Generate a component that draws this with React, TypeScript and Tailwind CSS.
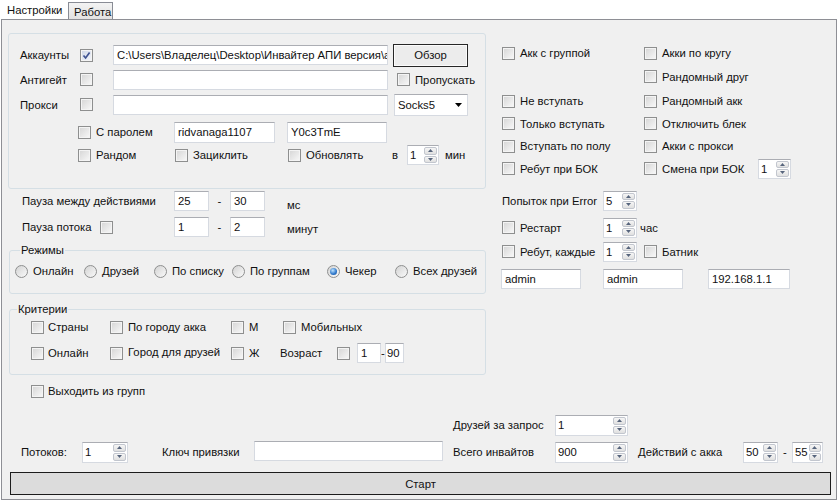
import React from "react";

type Cls = { className?: string };

function Check({ checked = false }: { checked?: boolean }) {
  return (
    <span
      className={`inline-flex items-center justify-center w-[13px] h-[13px] shrink-0 border border-[#8e8f8f] shadow-[inset_0_0_0_1px_#f4f4f4] bg-gradient-to-br ${
        checked ? "from-[#cdd5e6] to-[#f5f7fb]" : "from-[#d5d5d5] to-[#f9f9f9]"
      }`}
    >
      {checked && (
        <svg viewBox="0 0 9 9" className="w-[9px] h-[9px]">
          <path d="M1.5 4.5 L3.6 7 L7.6 1.6" fill="none" stroke="#3e5291" strokeWidth="1.7" />
        </svg>
      )}
    </span>
  );
}

function Radio({ checked = false }: { checked?: boolean }) {
  return (
    <span className="inline-flex items-center justify-center w-[13px] h-[13px] shrink-0 rounded-full border border-[#8e8f8f] bg-gradient-to-br from-[#d3d3d3] to-[#fafafa]">
      {checked && (
        <span className="w-[7px] h-[7px] rounded-full bg-[radial-gradient(circle_at_40%_35%,#bfe4ff,#2a74c9_60%,#1b4f96)]" />
      )}
    </span>
  );
}

function CheckText({ text, checked, className = "", gap = "ml-[5px]" }: { text: string; checked?: boolean; gap?: string } & Cls) {
  return (
    <div className={`flex items-center shrink-0 ${className}`}>
      <Check checked={checked} />
      <span className={`${gap} whitespace-nowrap`}>{text}</span>
    </div>
  );
}

function RadioText({ text, checked, className = "" }: { text: string; checked?: boolean } & Cls) {
  return (
    <div className={`flex items-center shrink-0 ${className}`}>
      <Radio checked={checked} />
      <span className="ml-[5px] whitespace-nowrap">{text}</span>
    </div>
  );
}

function Field({ value = "", className = "" }: { value?: string } & Cls) {
  return (
    <div
      className={`flex items-center shrink-0 bg-white border border-[#d6dae1] border-t-[#abadb3] pl-[3px] overflow-hidden whitespace-nowrap ${className}`}
    >
      {value}
    </div>
  );
}

function SpinBtn({ up = false }: { up?: boolean }) {
  return (
    <span className="flex-1 flex items-center justify-center border border-[#c2c6ce] rounded-[2px] bg-gradient-to-b from-[#f6f6f6] to-[#e0e0e0]">
      <svg viewBox="0 0 5 3" className="w-[5px] h-[3px]">
        <path d={up ? "M0 3 L2.5 0 L5 3 Z" : "M0 0 L2.5 3 L5 0 Z"} fill="#56647c" />
      </svg>
    </span>
  );
}

function Num({ value, className = "" }: { value: string } & Cls) {
  return (
    <div className={`flex shrink-0 bg-white border border-[#d6dae1] border-t-[#abadb3] ${className}`}>
      <span className="flex-1 flex items-center pl-[2px] whitespace-nowrap">{value}</span>
      <span className="flex flex-col w-[15px] p-[1px] gap-[1px]">
        <SpinBtn up />
        <SpinBtn />
      </span>
    </div>
  );
}

export default function App() {
  return (
    <div className="w-[838px] h-[502px] bg-white text-[11.3px] leading-[14px] text-[#111] overflow-hidden font-['Liberation_Sans',Arial,sans-serif]">
      {/* tabs */}
      <div className="flex items-end h-[19px]">
        <div className="w-[67px] h-[19px] bg-white pl-[7px] pt-[3px]">Настройки</div>
        <div className="ml-[1px] w-[45px] h-[17px] border border-b-0 border-[#898c95] bg-gradient-to-b from-[#f3f3f3] to-[#e2e2e2] pl-[5px] pt-[2px]">
          Работа
        </div>
      </div>

      <div className="ml-[1px] w-[836px] h-[481px] border border-[#8e8f95] bg-[#f0f0f0] flex flex-col">
        <div className="flex items-start">
          {/* left column */}
          <div className="ml-[6px] mt-[13px] w-[478px] flex flex-col">
            <div className="w-[478px] h-[156px] border border-[#d5dfe5] rounded-[3px] pt-[9px] pl-[11px]">
              <div className="flex items-center h-[24px]">
                <span className="w-[60px]">Аккаунты</span>
                <span className="w-[33px] flex"><Check checked /></span>
                <Field className="w-[275px] h-[20px]" value="C:\Users\Владелец\Desktop\Инвайтер АПИ версия\а" />
                <div className="ml-[5px] w-[75px] h-[23px] border border-[#262626] bg-[#ececec] shadow-[inset_0_0_0_1px_#fbfbfb] flex items-center justify-center">
                  Обзор
                </div>
              </div>
              <div className="flex items-center h-[25px]">
                <span className="w-[60px]">Антигейт</span>
                <span className="w-[33px] flex"><Check /></span>
                <Field className="w-[275px] h-[20px]" />
                <CheckText className="ml-[9px]" text="Пропускать" />
              </div>
              <div className="flex items-center h-[25px]">
                <span className="w-[60px]">Прокси</span>
                <span className="w-[33px] flex"><Check /></span>
                <Field className="w-[275px] h-[20px]" />
                <div className="ml-[6px] w-[74px] h-[22px] bg-white border border-[#d6dae1] border-t-[#abadb3] flex items-center pl-[3px]">
                  Socks5
                  <svg viewBox="0 0 7 4" className="ml-auto mr-[5px] w-[7px] h-[4px]">
                    <path d="M0 0 L3.5 4 L7 0 Z" fill="#000" />
                  </svg>
                </div>
              </div>
              <div className="flex items-center h-[22px] mt-[4px] pl-[58px]">
                <CheckText className="w-[96px]" text="С паролем" />
                <Field className="w-[101px] h-[21px]" value="ridvanaga1107" />
                <Field className="ml-[12px] w-[100px] h-[21px]" value="Y0c3TmE" />
              </div>
              <div className="flex items-center h-[20px] mt-[2px] pl-[58px]">
                <CheckText className="w-[97px]" text="Рандом" />
                <CheckText className="w-[113px]" text="Зациклить" />
                <CheckText className="w-[104px]" text="Обновлять" />
                <span className="w-[15px]">в</span>
                <Num className="w-[32px] h-[20px]" value="1" />
                <span className="ml-[6px]">мин</span>
              </div>
            </div>

            <div className="flex items-center h-[22px] mt-[1px] pl-[14px]">
              <span className="w-[152px]">Пауза между действиями</span>
              <Field className="w-[35px] h-[20px]" value="25" />
              <span className="w-[21px] text-center">-</span>
              <Field className="w-[35px] h-[20px]" value="30" />
              <span className="ml-[22px] mt-[8px]">мс</span>
            </div>
            <div className="flex items-center h-[22px] mt-[4px] pl-[14px]">
              <span className="w-[78px]">Пауза потока</span>
              <span className="w-[74px] flex"><Check /></span>
              <Field className="w-[35px] h-[20px]" value="1" />
              <span className="w-[21px] text-center">-</span>
              <Field className="w-[35px] h-[20px]" value="2" />
              <span className="ml-[22px] mt-[3px]">минут</span>
            </div>

            <fieldset className="mt-[5px] ml-[1px] w-[477px] h-[51px] border border-[#d5dfe5] rounded-[3px]">
              <legend className="ml-[10px] px-[1px]">Режимы</legend>
              <div className="flex items-center h-[22px] mt-[3px] pl-[5px]">
                <RadioText className="w-[69px]" text="Онлайн" />
                <RadioText className="w-[70px]" text="Друзей" />
                <RadioText className="w-[78px]" text="По списку" />
                <RadioText className="w-[95px]" text="По группам" />
                <RadioText className="w-[68px]" text="Чекер" checked />
                <RadioText text="Всех друзей" />
              </div>
            </fieldset>

            <fieldset className="mt-[8px] ml-[1px] w-[477px] h-[73px] border border-[#d5dfe5] rounded-[3px]">
              <legend className="ml-[7px] px-[1px]">Критерии</legend>
              <div className="flex items-center h-[22px] pl-[21px]">
                <CheckText className="w-[79px]" gap="ml-[4px]" text="Страны" />
                <CheckText className="w-[121px]" text="По городу акка" />
                <CheckText className="w-[52px]" text="М" />
                <CheckText text="Мобильных" />
              </div>
              <div className="flex items-center h-[22px] mt-[4px] pl-[21px]">
                <CheckText className="w-[79px]" gap="ml-[4px]" text="Онлайн" />
                <div className="w-[121px] flex items-center">
                  <Check />
                  <span className="ml-[5px] -mt-[3px]">Город для друзей</span>
                </div>
                <CheckText className="w-[49px]" text="Ж" />
                <span className="w-[57px]">Возраст</span>
                <Check />
                <Field className="ml-[7px] w-[24px] h-[20px]" value="1" />
                <span className="w-[4px] text-center">-</span>
                <Field className="w-[19px] h-[20px] !pl-[1px]" value="90" />
              </div>
            </fieldset>

            <div className="flex items-center h-[22px] mt-[5px] pl-[23px]">
              <CheckText gap="ml-[4px]" text="Выходить из групп" />
            </div>
          </div>

          {/* right column */}
          <div className="ml-[15px] mt-[22px] flex flex-col">
            <div className="flex items-center h-[22px] pl-[1px]">
              <CheckText className="w-[142px]" text="Акк с группой" />
              <CheckText text="Акки по кругу" />
            </div>
            <div className="flex items-center h-[25px] pl-[143px]">
              <CheckText text="Рандомный друг" />
            </div>
            <div className="flex items-center h-[24px] pl-[1px]">
              <CheckText className="w-[142px]" text="Не вступать" />
              <CheckText text="Рандомный акк" />
            </div>
            <div className="flex items-center h-[21px] pl-[1px]">
              <CheckText className="w-[142px]" text="Только вступать" />
              <CheckText text="Отключить блек" />
            </div>
            <div className="flex items-center h-[24px] pl-[1px]">
              <CheckText className="w-[142px]" text="Вступать по полу" />
              <CheckText text="Акки с прокси" />
            </div>
            <div className="flex items-center h-[21px] pl-[1px]">
              <CheckText className="w-[142px]" text="Ребут при БОК" />
              <CheckText className="w-[114px]" text="Смена при БОК" />
              <Num className="w-[33px] h-[20px]" value="1" />
            </div>

            <div className="flex items-center h-[21px] mt-[11px] pl-[1px]">
              <span className="w-[101px]">Попыток при Error</span>
              <Num className="w-[34px] h-[20px]" value="5" />
            </div>
            <div className="flex items-center h-[21px] mt-[6px] pl-[1px]">
              <CheckText className="w-[101px]" text="Рестарт" />
              <Num className="w-[34px] h-[20px]" value="1" />
              <span className="ml-[3px]">час</span>
            </div>
            <div className="flex items-center h-[21px] mt-[3px] pl-[1px]">
              <CheckText className="w-[101px]" text="Ребут, каждые" />
              <Num className="w-[34px] h-[20px]" value="1" />
              <CheckText className="ml-[7px]" text="Батник" />
            </div>
            <div className="flex items-center h-[20px] mt-[7px]">
              <Field className="w-[80px] h-[20px]" value="admin" />
              <Field className="ml-[22px] w-[80px] h-[20px]" value="admin" />
              <Field className="ml-[25px] w-[82px] h-[20px]" value="192.168.1.1" />
            </div>
          </div>
        </div>

        {/* bottom */}
        <div className="mt-auto pb-[4px] flex flex-col">
          <div className="flex items-center h-[22px] pl-[451px]">
            <span className="w-[102px]">Друзей за запрос</span>
            <Num className="w-[73px] h-[21px]" value="1" />
          </div>
          <div className="flex items-center h-[24px] mt-[4px] pl-[19px]">
            <span className="w-[61px]">Потоков:</span>
            <Num className="w-[46px] h-[21px]" value="1" />
            <span className="ml-[34px] w-[92px]">Ключ привязки</span>
            <Field className="w-[189px] h-[20px] -mt-[3px]" />
            <span className="ml-[10px] w-[102px]">Всего инвайтов</span>
            <Num className="w-[73px] h-[21px]" value="900" />
            <span className="ml-[10px] w-[105px]">Действий с акка</span>
            <Num className="w-[35px] h-[21px]" value="50" />
            <span className="w-[14px] text-center">-</span>
            <Num className="w-[31px] h-[21px]" value="55" />
          </div>
          <div className="mt-[8px] ml-[8px] w-[821px] h-[23px] border border-[#1c1c1c] bg-[#dcdcdc] flex items-center justify-center">
            Старт
          </div>
        </div>
      </div>
    </div>
  );
}
